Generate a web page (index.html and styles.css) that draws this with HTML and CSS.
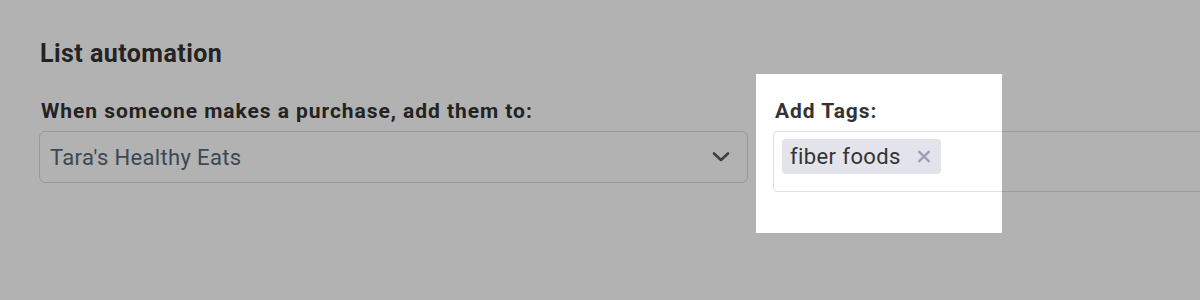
FILE: index.html
```html
<!DOCTYPE html>
<html lang="en">
<head>
<meta charset="utf-8">
<title>List automation</title>
<link rel="stylesheet" href="styles.css">
</head>
<body>
<section class="automation">
  <h2 class="title">List automation</h2>
  <div class="fields">
    <div class="field">
      <label class="label">When someone makes a purchase, add them to:</label>
      <div class="select">
        <span class="select-value">Tara's Healthy Eats</span>
        <svg class="chevron" width="18" height="12" viewBox="0 0 18 12" aria-hidden="true"><polyline points="2,2.5 9,9 16,2.5" fill="none" stroke="#5a5a5a" stroke-width="2.6" stroke-linecap="round" stroke-linejoin="round"/></svg>
      </div>
    </div>
    <div class="field">
      <label class="label">Add Tags:</label>
      <div class="tags">
        <span class="chip"><span class="chip-text">fiber foods</span><svg class="chip-x" width="14" height="13" viewBox="0 0 14 13" aria-hidden="true"><path d="M1.5 1.2 L12.5 11.8 M12.5 1.2 L1.5 11.8" stroke="#9c9db5" stroke-width="2.3" stroke-linecap="butt"/></svg></span>
      </div>
    </div>
  </div>
</section>
<div class="spotlight"></div>
</body>
</html>
```
FILE: styles.css
```css
html, body {
  margin: 0;
  padding: 0;
}
body {
  width: 1200px;
  height: 300px;
  overflow: hidden;
  background: #ffffff;
  font-family: Roboto, "Liberation Sans", sans-serif;
  color: #333333;
  position: relative;
}
.automation {
  padding: 39px 0 0 39px;
}
.title {
  margin: 0;
  font-size: 25px;
  line-height: 29px;
  font-weight: 700;
  letter-spacing: 0.45px;
  color: #333333;
  padding-left: 1px;
}
.fields {
  display: grid;
  grid-template-columns: 709px 709px;
  column-gap: 25px;
  margin-top: 31px;
  align-items: start;
}
.field {
  display: flex;
  flex-direction: column;
}
.label {
  font-size: 21px;
  line-height: 24px;
  font-weight: 700;
  letter-spacing: 0.95px;
  color: #333333;
  margin-bottom: 8px;
  padding-left: 2px;
}
.select {
  box-sizing: border-box;
  height: 52px;
  border: 1px solid #dcdcdc;
  border-radius: 6px;
  display: flex;
  align-items: center;
  justify-content: space-between;
  padding: 0 17px 0 10px;
}
.select-value {
  font-size: 22px;
  letter-spacing: 0.35px;
  color: #56687a;
}
.chevron {
  display: block;
}
.tags {
  box-sizing: border-box;
  height: 61px;
  border: 1px solid #e0e0e9;
  border-radius: 4px;
  padding: 7px 8px;
  display: flex;
  align-items: flex-start;
}
.chip {
  box-sizing: border-box;
  height: 35px;
  display: inline-flex;
  align-items: center;
  background: #e2e3eb;
  border-radius: 4px;
  padding: 0 10px 0 8px;
  font-size: 22px;
  letter-spacing: 0.4px;
  color: #333333;
}
.chip-x {
  display: block;
  margin-left: 16px;
}
.spotlight {
  position: absolute;
  left: 756px;
  top: 74px;
  width: 246px;
  height: 159px;
  box-shadow: 0 0 0 3000px rgba(0, 0, 0, 0.3);
  pointer-events: none;
}
```
